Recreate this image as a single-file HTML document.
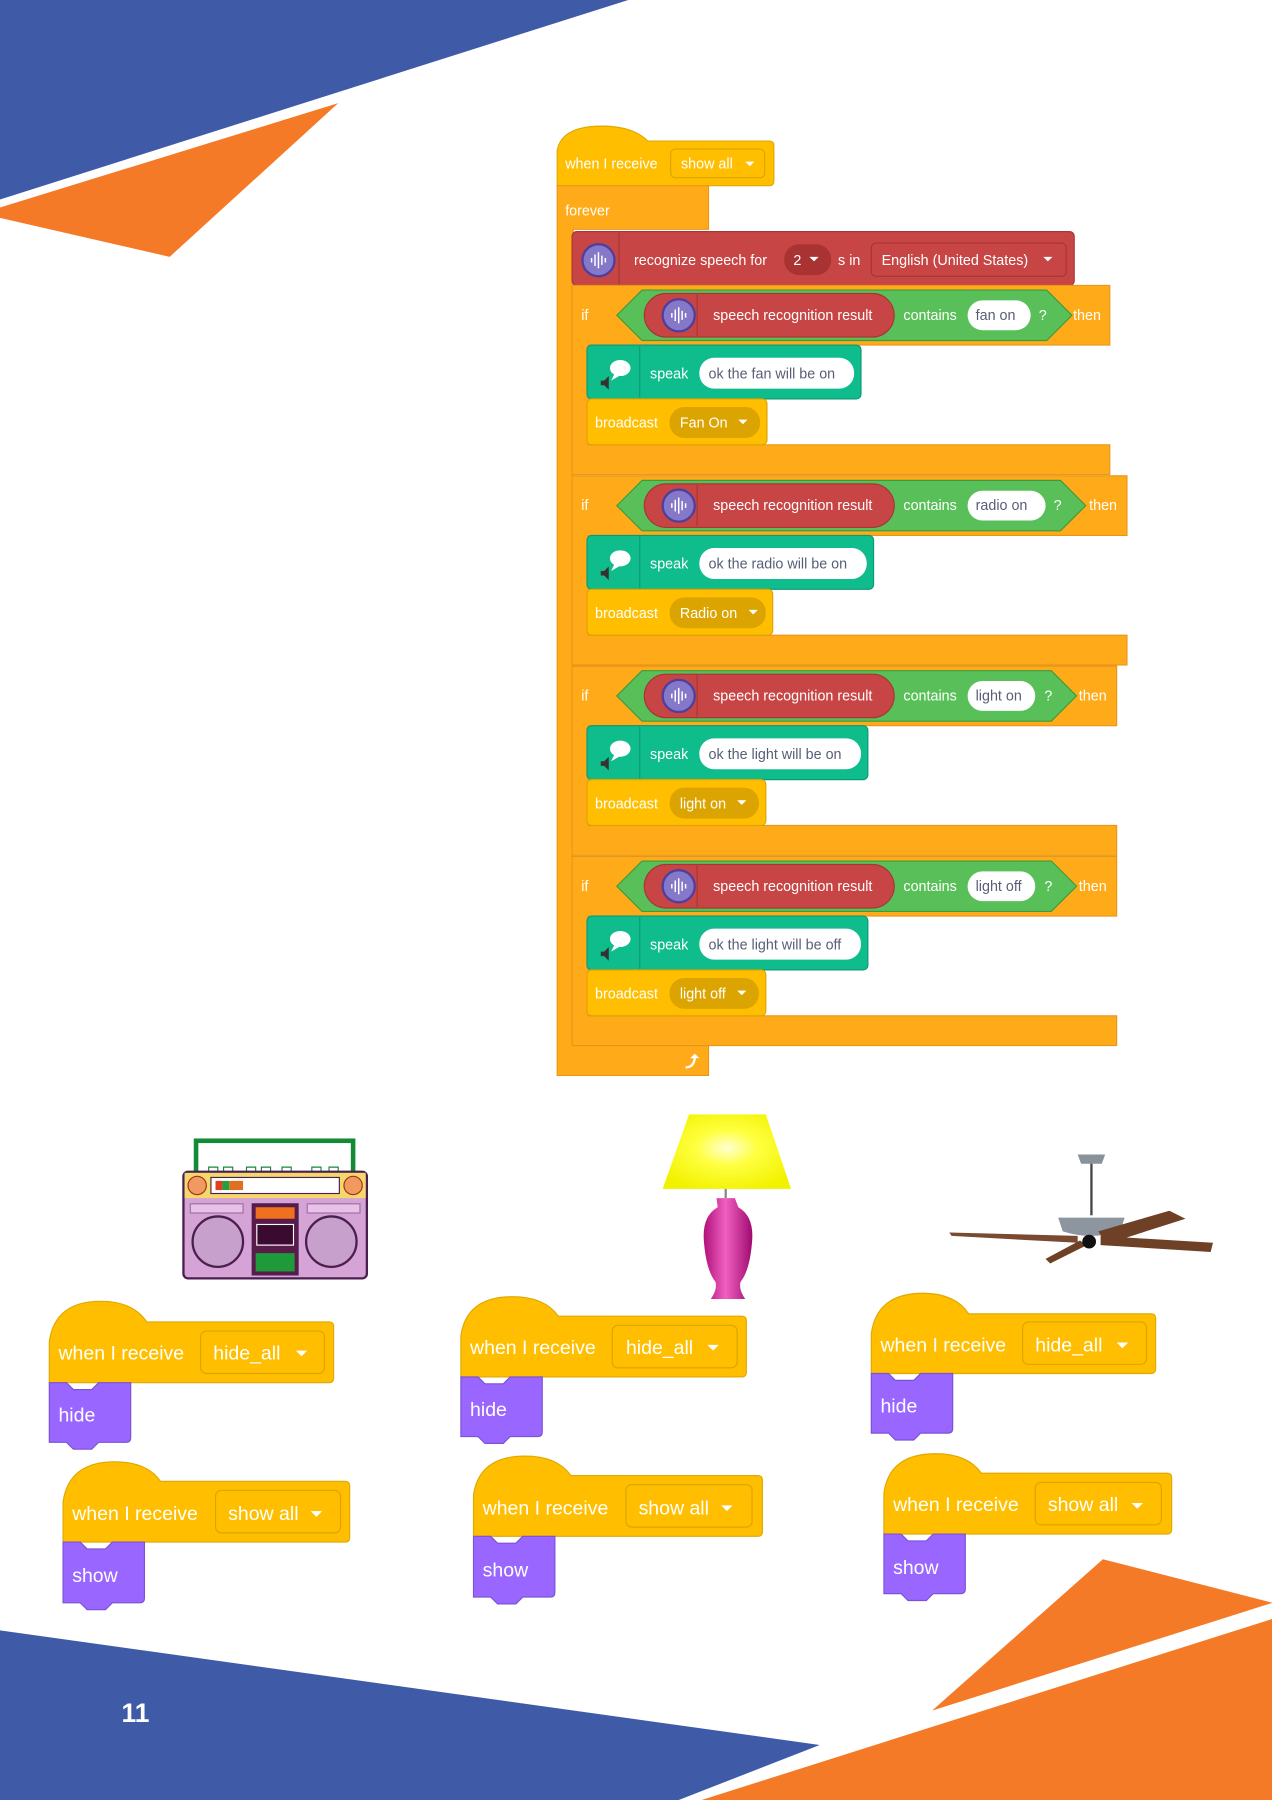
<!DOCTYPE html>
<html><head><meta charset="utf-8"><style>
html,body{margin:0;padding:0;background:#fff;}
svg{display:block;}
text{font-family:"Liberation Sans",sans-serif;}
</style></head><body>
<svg width="1272" height="1800" viewBox="0 0 1109.5 1570" preserveAspectRatio="none" xmlns="http://www.w3.org/2000/svg">
<defs>
<radialGradient id="lg" cx="0.5" cy="0.45" r="0.6"><stop offset="0" stop-color="#ffffd0"/><stop offset="0.4" stop-color="#ffff40"/><stop offset="1" stop-color="#f2f200"/></radialGradient>
<linearGradient id="pg" x1="0" y1="0" x2="1" y2="0"><stop offset="0" stop-color="#b0107a"/><stop offset="0.45" stop-color="#f060c0"/><stop offset="1" stop-color="#a00a70"/></linearGradient>
<g id="mic"><circle r="14" fill="#8578c8" stroke="#4e3f9c" stroke-width="2"/><path d="M-6 -2v4M-3 -5v10M0 -7v14M3 -4v8M6 -2v4" stroke="#fff" stroke-width="1.3"/></g>
<g id="spk"><ellipse cx="4" cy="-5" rx="9" ry="7" fill="#fff"/><path d="M-1 0 l-3 6 l7 -4z" fill="#fff"/><path d="M-13 6 h3 l4 -4 v12 l-4 -4 h-3z" fill="#333"/></g>
</defs>
<!-- backgrounds -->
<polygon points="0,0 548,0 0,174" fill="#3f5ba8"/>
<polygon points="0,181 295,90 148,224 0,190" fill="#f47a27"/>
<polygon points="0,1422 715,1522 592,1570 0,1570" fill="#3f5ba8"/>
<polygon points="612,1570 1110,1412 1110,1570" fill="#f47a27"/>
<polygon points="962,1360 1110,1398 813,1492" fill="#f47a27"/>
<text x="106" y="1502" font-size="23" font-weight="bold" fill="#fff">11</text>

<!-- main hat -->
<path d="M486 131 Q490 110 525 110 Q552 110 565 123 H671 Q675 123 675 127 V158 Q675 162 671 162 H486 Z" fill="#ffbf00" stroke="#e0a800"/>
<text x="493" y="147" font-size="12.5" fill="#fff">when I receive</text>
<rect x="585" y="130" width="82" height="25" rx="4" fill="#ffbf00" stroke="#dba400"/>
<text x="594" y="147" font-size="12.5" fill="#fff">show all</text>
<path d="M650 141h8l-4 4z" fill="#fff"/>
<!-- forever -->
<path d="M486 162 H618 V200 H500 V912 H618 V938 H486 Z" fill="#ffab19" stroke="#e8961a"/>
<text x="493" y="188" font-size="12.5" fill="#fff">forever</text>
<path d="M598 930 q6 0 7 -7 l-3 0 l4 -4 l4 4 l-3 0 q-1 9 -9 9z" fill="#fff"/>
<!-- recognize -->
<rect x="499" y="202" width="438" height="47" rx="4" fill="#c84545" stroke="#a83434"/>
<use href="#mic" x="522" y="227"/>
<line x1="540" y1="203" x2="540" y2="248" stroke="#a83434"/>
<text x="553" y="231" font-size="12.5" fill="#fff">recognize speech for</text>
<rect x="684" y="213" width="41" height="27" rx="13" fill="#a93333"/>
<text x="692" y="231" font-size="12.5" fill="#fff">2</text>
<path d="M706 224h8l-4 4z" fill="#fff"/>
<text x="731" y="231" font-size="12.5" fill="#fff">s in</text>
<rect x="760" y="212" width="170" height="29" rx="4" fill="#c84545" stroke="#a83434"/>
<text x="769" y="231" font-size="12.5" fill="#fff">English (United States)</text>
<path d="M910 224h8l-4 4z" fill="#fff"/>

<!-- IF 1 -->
<g>
<path d="M499 249 H968 V301 H513 V388 H968 V414 H499 Z" fill="#ffab19" stroke="#e8961a"/>
<text x="507" y="279" font-size="12.5" fill="#fff">if</text>
<polygon points="538,275 560,253 913,253 935,275 913,297 560,297" fill="#59c059" stroke="#3d9a3d"/>
<rect x="562" y="256" width="218" height="38" rx="19" fill="#c84545" stroke="#a83434"/>
<use href="#mic" x="592" y="275"/><line x1="608" y1="257" x2="608" y2="293" stroke="#a83434"/>
<text x="622" y="279" font-size="12.5" fill="#fff">speech recognition result</text>
<text x="788" y="279" font-size="12.5" fill="#fff">contains</text>
<rect x="844" y="262" width="55" height="26" rx="13" fill="#fff"/>
<text x="851" y="279" font-size="12.5" fill="#575e75">fan on</text>
<text x="906" y="279" font-size="12.5" fill="#fff">?</text>
<text x="936" y="279" font-size="12.5" fill="#fff">then</text>
<rect x="512" y="301" width="239" height="47" rx="4" fill="#0fbd8c" stroke="#0b9a72"/>
<use href="#spk" x="537" y="326"/><line x1="558" y1="302" x2="558" y2="347" stroke="#0b9a72"/>
<text x="567" y="330" font-size="12.5" fill="#fff">speak</text>
<rect x="610" y="312" width="135" height="27" rx="13" fill="#fff"/>
<text x="618" y="330" font-size="12.5" fill="#575e75">ok the fan will be on</text>
<rect x="512" y="348" width="157" height="40" rx="4" fill="#ffbf00" stroke="#dba400"/>
<text x="519" y="373" font-size="12.5" fill="#fff">broadcast</text>
<rect x="584" y="355" width="79" height="27" rx="13" fill="#dba400"/>
<text x="593" y="373" font-size="12.5" fill="#fff">Fan On</text>
<path d="M644 366h8l-4 4z" fill="#fff"/>
</g>
<!-- IF 2 -->
<g transform="translate(0,166)">
<path d="M499 249 H983 V301 H513 V388 H983 V414 H499 Z" fill="#ffab19" stroke="#e8961a"/>
<text x="507" y="279" font-size="12.5" fill="#fff">if</text>
<polygon points="538,275 560,253 925,253 947,275 925,297 560,297" fill="#59c059" stroke="#3d9a3d"/>
<rect x="562" y="256" width="218" height="38" rx="19" fill="#c84545" stroke="#a83434"/>
<use href="#mic" x="592" y="275"/><line x1="608" y1="257" x2="608" y2="293" stroke="#a83434"/>
<text x="622" y="279" font-size="12.5" fill="#fff">speech recognition result</text>
<text x="788" y="279" font-size="12.5" fill="#fff">contains</text>
<rect x="844" y="262" width="68" height="26" rx="13" fill="#fff"/>
<text x="851" y="279" font-size="12.5" fill="#575e75">radio on</text>
<text x="919" y="279" font-size="12.5" fill="#fff">?</text>
<text x="950" y="279" font-size="12.5" fill="#fff">then</text>
<rect x="512" y="301" width="250" height="47" rx="4" fill="#0fbd8c" stroke="#0b9a72"/>
<use href="#spk" x="537" y="326"/><line x1="558" y1="302" x2="558" y2="347" stroke="#0b9a72"/>
<text x="567" y="330" font-size="12.5" fill="#fff">speak</text>
<rect x="610" y="312" width="146" height="27" rx="13" fill="#fff"/>
<text x="618" y="330" font-size="12.5" fill="#575e75">ok the radio will be on</text>
<rect x="512" y="348" width="162" height="40" rx="4" fill="#ffbf00" stroke="#dba400"/>
<text x="519" y="373" font-size="12.5" fill="#fff">broadcast</text>
<rect x="584" y="355" width="84" height="27" rx="13" fill="#dba400"/>
<text x="593" y="373" font-size="12.5" fill="#fff">Radio on</text>
<path d="M653 366h8l-4 4z" fill="#fff"/>
</g>
<!-- IF 3 -->
<g transform="translate(0,332)">
<path d="M499 249 H974 V301 H513 V388 H974 V414 H499 Z" fill="#ffab19" stroke="#e8961a"/>
<text x="507" y="279" font-size="12.5" fill="#fff">if</text>
<polygon points="538,275 560,253 917,253 939,275 917,297 560,297" fill="#59c059" stroke="#3d9a3d"/>
<rect x="562" y="256" width="218" height="38" rx="19" fill="#c84545" stroke="#a83434"/>
<use href="#mic" x="592" y="275"/><line x1="608" y1="257" x2="608" y2="293" stroke="#a83434"/>
<text x="622" y="279" font-size="12.5" fill="#fff">speech recognition result</text>
<text x="788" y="279" font-size="12.5" fill="#fff">contains</text>
<rect x="844" y="262" width="59" height="26" rx="13" fill="#fff"/>
<text x="851" y="279" font-size="12.5" fill="#575e75">light on</text>
<text x="911" y="279" font-size="12.5" fill="#fff">?</text>
<text x="941" y="279" font-size="12.5" fill="#fff">then</text>
<rect x="512" y="301" width="245" height="47" rx="4" fill="#0fbd8c" stroke="#0b9a72"/>
<use href="#spk" x="537" y="326"/><line x1="558" y1="302" x2="558" y2="347" stroke="#0b9a72"/>
<text x="567" y="330" font-size="12.5" fill="#fff">speak</text>
<rect x="610" y="312" width="141" height="27" rx="13" fill="#fff"/>
<text x="618" y="330" font-size="12.5" fill="#575e75">ok the light will be on</text>
<rect x="512" y="348" width="156" height="40" rx="4" fill="#ffbf00" stroke="#dba400"/>
<text x="519" y="373" font-size="12.5" fill="#fff">broadcast</text>
<rect x="584" y="355" width="78" height="27" rx="13" fill="#dba400"/>
<text x="593" y="373" font-size="12.5" fill="#fff">light on</text>
<path d="M643 366h8l-4 4z" fill="#fff"/>
</g>
<!-- IF 4 -->
<g transform="translate(0,498)">
<path d="M499 249 H974 V301 H513 V388 H974 V414 H499 Z" fill="#ffab19" stroke="#e8961a"/>
<text x="507" y="279" font-size="12.5" fill="#fff">if</text>
<polygon points="538,275 560,253 917,253 939,275 917,297 560,297" fill="#59c059" stroke="#3d9a3d"/>
<rect x="562" y="256" width="218" height="38" rx="19" fill="#c84545" stroke="#a83434"/>
<use href="#mic" x="592" y="275"/><line x1="608" y1="257" x2="608" y2="293" stroke="#a83434"/>
<text x="622" y="279" font-size="12.5" fill="#fff">speech recognition result</text>
<text x="788" y="279" font-size="12.5" fill="#fff">contains</text>
<rect x="844" y="262" width="59" height="26" rx="13" fill="#fff"/>
<text x="851" y="279" font-size="12.5" fill="#575e75">light off</text>
<text x="911" y="279" font-size="12.5" fill="#fff">?</text>
<text x="941" y="279" font-size="12.5" fill="#fff">then</text>
<rect x="512" y="301" width="245" height="47" rx="4" fill="#0fbd8c" stroke="#0b9a72"/>
<use href="#spk" x="537" y="326"/><line x1="558" y1="302" x2="558" y2="347" stroke="#0b9a72"/>
<text x="567" y="330" font-size="12.5" fill="#fff">speak</text>
<rect x="610" y="312" width="141" height="27" rx="13" fill="#fff"/>
<text x="618" y="330" font-size="12.5" fill="#575e75">ok the light will be off</text>
<rect x="512" y="348" width="156" height="40" rx="4" fill="#ffbf00" stroke="#dba400"/>
<text x="519" y="373" font-size="12.5" fill="#fff">broadcast</text>
<rect x="584" y="355" width="78" height="27" rx="13" fill="#dba400"/>
<text x="593" y="373" font-size="12.5" fill="#fff">light off</text>
<path d="M643 366h8l-4 4z" fill="#fff"/>
</g>

<!-- boombox -->
<rect x="171" y="995" width="137" height="32" fill="#fff" stroke="#138a36" stroke-width="4"/>
<path d="M182 1018h8v6h-8zM195 1018h8v6h-8zM215 1018h8v6h-8zM228 1018h8v6h-8zM246 1018h8v6h-8zM272 1018h8v6h-8zM287 1018h8v6h-8z" fill="none" stroke="#138a36" stroke-width="1"/>
<rect x="160" y="1022" width="160" height="93" rx="4" fill="#d6a3d6" stroke="#4a1f50" stroke-width="2"/>
<rect x="161" y="1023" width="158" height="22" fill="#f5d86a"/>
<circle cx="172" cy="1034" r="8" fill="#f09a60" stroke="#a03020"/>
<circle cx="308" cy="1034" r="8" fill="#f09a60" stroke="#a03020"/>
<rect x="184" y="1027" width="112" height="14" fill="#fff" stroke="#4a1f50"/>
<rect x="188" y="1030" width="6" height="8" fill="#e04020"/><rect x="194" y="1030" width="6" height="8" fill="#20a040"/><rect x="200" y="1030" width="12" height="8" fill="#e07020"/>
<circle cx="190" cy="1083" r="22" fill="#c7a0cc" stroke="#4a1f50" stroke-width="2"/>
<circle cx="289" cy="1083" r="22" fill="#c7a0cc" stroke="#4a1f50" stroke-width="2"/>
<rect x="220" y="1050" width="40" height="62" fill="#5a1a4a" stroke="#4a1f50"/>
<rect x="223" y="1053" width="34" height="10" fill="#f07020"/>
<rect x="224" y="1068" width="32" height="18" fill="#3a0a30" stroke="#fff"/>
<rect x="223" y="1093" width="34" height="16" fill="#1f9a3a"/>
<rect x="166" y="1050" width="46" height="8" fill="#e8c0e8" stroke="#9a70a0"/>
<rect x="268" y="1050" width="46" height="8" fill="#e8c0e8" stroke="#9a70a0"/>
<!-- lamp -->
<polygon points="601,972 668,972 690,1037 578,1037" fill="url(#lg)"/>
<line x1="633" y1="1037" x2="633" y2="1045" stroke="#888" stroke-width="2"/>
<path d="M625 1045 h16 l3 8 q14 8 12 30 q-2 25 -10 35 q-2 6 4 15 h-30 q6 -9 4 -15 q-8 -10 -10 -35 q-2 -22 12 -30 z" fill="url(#pg)"/>
<!-- fan -->
<path d="M940 1007 h24 l-3 8 h-18z" fill="#8a9299"/>
<line x1="952" y1="1015" x2="952" y2="1060" stroke="#444" stroke-width="2"/>
<path d="M923 1062 h58 l-4 12 q-25 8 -50 0z" fill="#8d969e"/>
<polygon points="828,1075 940,1078 940,1084 830,1078" fill="#7a4a30"/>
<polygon points="960,1078 1058,1084 1056,1092 960,1086" fill="#6e4026"/>
<polygon points="958,1074 1020,1056 1034,1063 965,1085" fill="#6e4026"/>
<polygon points="912,1098 942,1082 948,1086 916,1102" fill="#6e4026"/>
<circle cx="950" cy="1083" r="6" fill="#111"/>

<!-- bottom hats -->
<g font-size="17" fill="#fff">
<!-- col1 hide -->
<path d="M43 1170 Q48 1135 88 1135 Q116 1135 128 1153 H287 Q291 1153 291 1157 V1202 Q291 1206 287 1206 H43 Z" fill="#ffbf00" stroke="#e0a800"/>
<text x="51" y="1186">when I receive</text>
<rect x="175" y="1161" width="108" height="37" rx="5" fill="#ffbf00" stroke="#dba400"/>
<text x="186" y="1186">hide_all</text><path d="M258 1178h10l-5 5z"/>
<path d="M43 1206 H58 L64 1212 H80 L86 1206 H114 V1254 Q114 1258 110 1258 H86 L80 1264 H64 L58 1258 H43 Z" fill="#9966ff" stroke="#7a52d6"/>
<text x="51" y="1240">hide</text>
<!-- col1 show -->
<path d="M55 1310 Q60 1275 100 1275 Q128 1275 140 1292 H301 Q305 1292 305 1296 V1341 Q305 1345 301 1345 H55 Z" fill="#ffbf00" stroke="#e0a800"/>
<text x="63" y="1326">when I receive</text>
<rect x="188" y="1300" width="109" height="37" rx="5" fill="#ffbf00" stroke="#dba400"/>
<text x="199" y="1326">show all</text><path d="M271 1318h10l-5 5z"/>
<path d="M55 1345 H70 L76 1351 H92 L98 1345 H126 V1394 Q126 1398 122 1398 H98 L92 1404 H76 L70 1398 H55 Z" fill="#9966ff" stroke="#7a52d6"/>
<text x="63" y="1380">show</text>
<!-- col2 hide -->
<path d="M402 1165 Q407 1131 447 1131 Q475 1131 487 1148 H647 Q651 1148 651 1152 V1197 Q651 1201 647 1201 H402 Z" fill="#ffbf00" stroke="#e0a800"/>
<text x="410" y="1181">when I receive</text>
<rect x="534" y="1156" width="109" height="37" rx="5" fill="#ffbf00" stroke="#dba400"/>
<text x="546" y="1181">hide_all</text><path d="M617 1173h10l-5 5z"/>
<path d="M402 1201 H417 L423 1207 H439 L445 1201 H473 V1249 Q473 1253 469 1253 H445 L439 1259 H423 L417 1253 H402 Z" fill="#9966ff" stroke="#7a52d6"/>
<text x="410" y="1235">hide</text>
<!-- col2 show -->
<path d="M413 1304 Q418 1270 458 1270 Q486 1270 498 1287 H661 Q665 1287 665 1291 V1336 Q665 1340 661 1340 H413 Z" fill="#ffbf00" stroke="#e0a800"/>
<text x="421" y="1321">when I receive</text>
<rect x="546" y="1295" width="110" height="37" rx="5" fill="#ffbf00" stroke="#dba400"/>
<text x="557" y="1321">show all</text><path d="M629 1313h10l-5 5z"/>
<path d="M413 1340 H428 L434 1346 H450 L456 1340 H484 V1389 Q484 1393 480 1393 H456 L450 1399 H434 L428 1393 H413 Z" fill="#9966ff" stroke="#7a52d6"/>
<text x="421" y="1375">show</text>
<!-- col3 hide -->
<path d="M760 1163 Q765 1128 805 1128 Q833 1128 845 1146 H1004 Q1008 1146 1008 1150 V1194 Q1008 1198 1004 1198 H760 Z" fill="#ffbf00" stroke="#e0a800"/>
<text x="768" y="1179">when I receive</text>
<rect x="892" y="1153" width="108" height="37" rx="5" fill="#ffbf00" stroke="#dba400"/>
<text x="903" y="1179">hide_all</text><path d="M974 1171h10l-5 5z"/>
<path d="M760 1198 H775 L781 1204 H797 L803 1198 H831 V1246 Q831 1250 827 1250 H803 L797 1256 H781 L775 1250 H760 Z" fill="#9966ff" stroke="#7a52d6"/>
<text x="768" y="1232">hide</text>
<!-- col3 show -->
<path d="M771 1302 Q776 1268 816 1268 Q844 1268 856 1285 H1018 Q1022 1285 1022 1289 V1334 Q1022 1338 1018 1338 H771 Z" fill="#ffbf00" stroke="#e0a800"/>
<text x="779" y="1318">when I receive</text>
<rect x="903" y="1293" width="110" height="37" rx="5" fill="#ffbf00" stroke="#dba400"/>
<text x="914" y="1318">show all</text><path d="M987 1311h10l-5 5z"/>
<path d="M771 1338 H786 L792 1344 H808 L814 1338 H842 V1386 Q842 1390 838 1390 H814 L808 1396 H792 L786 1390 H771 Z" fill="#9966ff" stroke="#7a52d6"/>
<text x="779" y="1373">show</text>
</g>
</svg>
</body></html>
